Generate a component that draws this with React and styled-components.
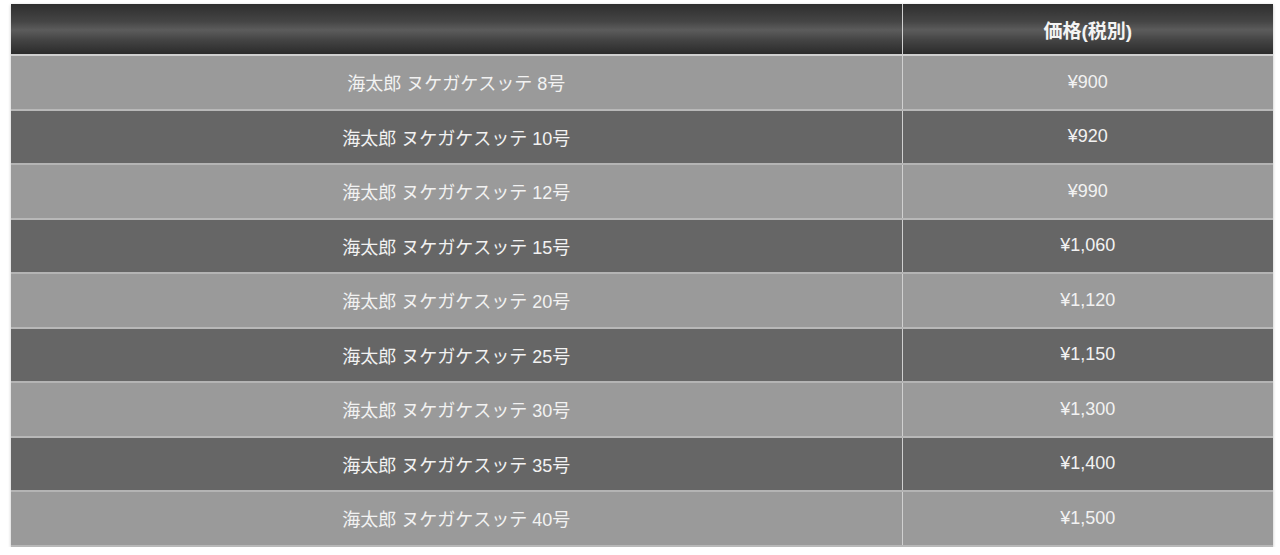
import React from 'react'
import styled, { createGlobalStyle } from 'styled-components'

const GlobalStyle = createGlobalStyle`
  html, body {
    margin: 0;
    background: #fff;
  }
`

const Wrap = styled.div`
  padding: 4px 7px 0 11px;
`

const Table = styled.table`
  width: 1262px;
  border-collapse: collapse;
  table-layout: fixed;
  font-family: "Liberation Sans", "Noto Sans CJK JP", sans-serif;
  box-shadow: 0 1px 3px rgba(0, 0, 0, 0.25);
`

const HeadCell = styled.th`
  height: 50px;
  padding: 0;
  color: #f4f4f4;
  font-size: 19px;
  font-weight: bold;
  text-align: center;
  background: linear-gradient(#2e2e2e 0%, #454545 35%, #5c5c5c 52%, #444 72%, #2b2b2b 100%);
  border-left: 1px solid #d0d0d0;
  border-bottom: 2px solid #cfcfcf;
  &:first-child {
    border-left: none;
  }
`

const Cell = styled.td`
  height: 52.5px;
  padding: 0;
  color: #f2f2f2;
  font-size: 18px;
  text-align: center;
  background: ${p => (p.$dark ? '#666' : '#9a9a9a')};
  border-left: 1px solid #d0d0d0;
  border-bottom: 2px solid ${p => (p.$dark ? '#b4b4b4' : '#b8b8b8')};
  &:first-child {
    border-left: none;
  }
`

const rows = [
  ['8号', '¥900'],
  ['10号', '¥920'],
  ['12号', '¥990'],
  ['15号', '¥1,060'],
  ['20号', '¥1,120'],
  ['25号', '¥1,150'],
  ['30号', '¥1,300'],
  ['35号', '¥1,400'],
  ['40号', '¥1,500'],
]

export default function App() {
  return (
    <>
      <GlobalStyle />
      <Wrap>
        <Table>
          <colgroup>
            <col style={{ width: 891 }} />
            <col />
          </colgroup>
          <thead>
            <tr>
              <HeadCell></HeadCell>
              <HeadCell>価格(税別)</HeadCell>
            </tr>
          </thead>
          <tbody>
            {rows.map((r, i) => (
              <tr key={r[0]}>
                <Cell $dark={i % 2 === 1}>海太郎 ヌケガケスッテ {r[0]}</Cell>
                <Cell $dark={i % 2 === 1}>{r[1]}</Cell>
              </tr>
            ))}
          </tbody>
        </Table>
      </Wrap>
    </>
  )
}
